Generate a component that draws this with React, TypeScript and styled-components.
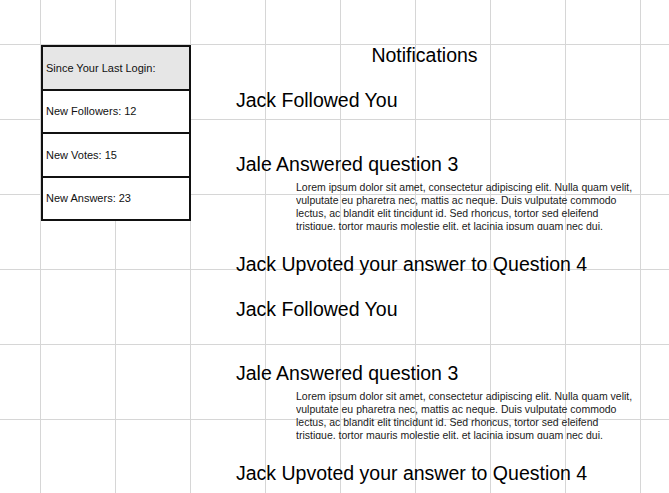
import React from "react";
import styled, { createGlobalStyle } from "styled-components";

const GlobalStyle = createGlobalStyle`
  html, body {
    margin: 0;
    padding: 0;
  }
  body {
    min-height: 100vh;
    font-family: "Liberation Sans", Arial, sans-serif;
    color: #000;
    background-color: #fff;
    background-image:
      linear-gradient(to right, #d6d6d6 1px, transparent 1px),
      linear-gradient(to bottom, #d6d6d6 1px, transparent 1px);
    background-size: 75px 75px;
    background-position: 40px 44px;
  }
`;

const Page = styled.div`
  display: flex;
  align-items: flex-start;
  padding: 44px 0 0 41px;
`;

const Sidebar = styled.div`
  width: 150px;
  box-sizing: border-box;
  margin-top: 1px;
  border: 2px solid #111;
  display: flex;
  flex-direction: column;
  flex-shrink: 0;
`;

const StatRow = styled.div<{ $header?: boolean }>`
  height: 41.5px;
  display: flex;
  align-items: center;
  padding-left: 3px;
  font-size: 11px;
  color: #111;
  background: ${(p) => (p.$header ? "#e6e6e6" : "#fff")};
  & + & {
    border-top: 2px solid #111;
  }
`;

const Main = styled.div`
  flex: 1;
  display: flex;
  flex-direction: column;
  gap: 22px;
`;

const Title = styled.h1`
  margin: 0;
  font-size: 19.5px;
  font-weight: normal;
  line-height: normal;
  text-align: center;
  padding-right: 11px;
`;

const Item = styled.div<{ $minHeight?: number }>`
  padding-left: 45px;
  min-height: ${(p) => (p.$minHeight ? `${p.$minHeight}px` : "auto")};
  display: flex;
  flex-direction: column;
`;

const Heading = styled.h2`
  margin: 0;
  font-size: 19.5px;
  font-weight: normal;
  line-height: normal;
  white-space: nowrap;
`;

const Body = styled.p`
  margin: 4.5px 0 1px 60px;
  width: 340px;
  height: 49.5px;
  overflow: hidden;
  font-size: 10.5px;
  line-height: 13.3px;
  color: #1a1a1a;
`;

const LOREM =
  "Lorem ipsum dolor sit amet, consectetur adipiscing elit. Nulla quam velit, vulputate eu pharetra nec, mattis ac neque. Duis vulputate commodo lectus, ac blandit elit tincidunt id. Sed rhoncus, tortor sed eleifend tristique, tortor mauris molestie elit, et lacinia ipsum quam nec dui. Quisque nec mauris sit amet elit iaculis pretium sit amet quis magna.";

type Note =
  | { kind: "follow"; text: string }
  | { kind: "answer"; text: string; body: string }
  | { kind: "vote"; text: string };

const notes: Note[] = [
  { kind: "follow", text: "Jack Followed You" },
  { kind: "answer", text: "Jale Answered question 3", body: LOREM },
  { kind: "vote", text: "Jack Upvoted your answer to Question 4" },
  { kind: "follow", text: "Jack Followed You" },
  { kind: "answer", text: "Jale Answered question 3", body: LOREM },
  { kind: "vote", text: "Jack Upvoted your answer to Question 4" },
];

const stats = [
  "New Followers: 12",
  "New Votes: 15",
  "New Answers: 23",
];

export default function App() {
  return (
    <>
      <GlobalStyle />
      <Page>
        <Sidebar>
          <StatRow $header>Since Your Last Login:</StatRow>
          {stats.map((s) => (
            <StatRow key={s}>{s}</StatRow>
          ))}
        </Sidebar>
        <Main>
          <Title>Notifications</Title>
          {notes.map((n, i) => (
            <Item key={i} $minHeight={n.kind === "follow" ? 42 : undefined}>
              <Heading>{n.text}</Heading>
              {n.kind === "answer" && <Body>{n.body}</Body>}
            </Item>
          ))}
        </Main>
      </Page>
    </>
  );
}
